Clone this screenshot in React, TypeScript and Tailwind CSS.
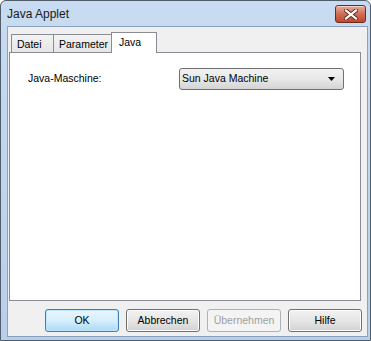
const font = { fontFamily: '"Liberation Sans", Arial, sans-serif' };

const CloseButton = () => (
  <div className="w-[31px] h-[18px] rounded-[3px] border border-[#6e2a1c] bg-gradient-to-b from-[#e9aa98] via-[#cf6d57] to-[#c0452c] flex items-center justify-center shadow-[inset_0_1px_0_rgba(255,255,255,0.5)]">
    <svg width="14" height="11" viewBox="0 0 14 11">
      <path
        d="M2 1.5 L12 9.5 M12 1.5 L2 9.5"
        stroke="#5a2a22"
        strokeWidth="4"
        strokeLinecap="square"
      />
      <path
        d="M2 1.5 L12 9.5 M12 1.5 L2 9.5"
        stroke="#ffffff"
        strokeWidth="2.2"
        strokeLinecap="square"
      />
    </svg>
  </div>
);

const Tab = ({ label, active, first }: { label: string; active?: boolean; first?: boolean }) => {
  if (active) {
    return (
      <div className="relative z-10 -ml-px -mb-px h-[21px] w-[46px] border border-b-0 border-[#898c95] bg-white pl-[7px] pt-[2px] text-[10.5px] leading-[14px] text-black">
        {label}
      </div>
    );
  }
  return (
    <div
      className={`h-[18px] border-t border-r border-[#898c95] bg-gradient-to-b from-[#f3f3f3] to-[#e6e6e6] pl-[5px] pt-[3px] text-[10.5px] leading-[13px] text-black ${
        first ? "border-l w-[43px]" : "w-[58px] pl-[5px]"
      }`}
    >
      {label}
    </div>
  );
};

const Button = ({ label, primary, disabled }: { label: string; primary?: boolean; disabled?: boolean }) => {
  if (disabled) {
    return (
      <div className="w-[74px] h-[23px] rounded-[3px] border border-[#adb2b5] bg-[#f4f4f4] flex items-center justify-center text-[10.5px] text-[#a0a0a0]">
        {label}
      </div>
    );
  }
  if (primary) {
    return (
      <div className="w-[74px] h-[23px] rounded-[3px] border border-[#3c7fb1] bg-gradient-to-b from-[#eaf6fd] via-[#d7effc] to-[#a9d9f3] shadow-[inset_0_0_0_1px_#bfe7fb] flex items-center justify-center text-[10.5px] text-black">
        {label}
      </div>
    );
  }
  return (
    <div className="w-[74px] h-[23px] rounded-[3px] border border-[#707070] bg-gradient-to-b from-[#f2f2f2] via-[#e6e6e6] to-[#d2d2d2] shadow-[inset_0_0_0_1px_#fcfcfc] flex items-center justify-center text-[10.5px] text-black">
      {label}
    </div>
  );
};

export default function App() {
  return (
    <div className="w-[371px] h-[341px] bg-white" style={font}>
      <div className="flex h-full w-full flex-col rounded-t-[6px] border border-[#4f5d6d] bg-gradient-to-b from-[#c8dbf1] to-[#b8cfea]">
        {/* Title bar */}
        <div className="flex h-[25px] items-center justify-between pl-[6px] pr-[4px] pt-[1px]">
          <span className="text-[12px] text-[#1a1a1a]">Java Applet</span>
          <CloseButton />
        </div>

        {/* Client area */}
        <div className="ml-[6px] mr-[2px] mb-[3px] flex flex-1 flex-col border border-[#8aa2bf] bg-[#f0f0f0]">
          {/* Tabs */}
          <div className="ml-[3px] mt-[5px] flex h-[20px] items-end">
            <Tab label="Datei" first />
            <Tab label="Parameter" />
            <Tab label="Java" active />
          </div>

          {/* Panel */}
          <div className="ml-[1px] h-[249px] w-[352px] border border-[#898c95] bg-white">
            <div className="mt-[15px] flex items-center">
              <span className="ml-[18px] w-[151px] text-[10.5px] text-black">Java-Maschine:</span>
              <div className="flex h-[22px] w-[165px] items-center justify-between rounded-[3px] border border-[#707070] bg-gradient-to-b from-[#f2f2f2] via-[#e8e8e8] to-[#d4d4d4] pl-[2px] pr-[8px] text-[10.5px] text-black">
                <span>Sun Java Machine</span>
                <svg width="7" height="4" viewBox="0 0 7 4">
                  <path d="M0 0 H7 L3.5 4 Z" fill="#000" />
                </svg>
              </div>
            </div>
          </div>

          {/* Buttons */}
          <div className="ml-[37px] mt-[8px] flex gap-[7px]">
            <Button label="OK" primary />
            <Button label="Abbrechen" />
            <Button label="Übernehmen" disabled />
            <Button label="Hilfe" />
          </div>
        </div>
      </div>
    </div>
  );
}
